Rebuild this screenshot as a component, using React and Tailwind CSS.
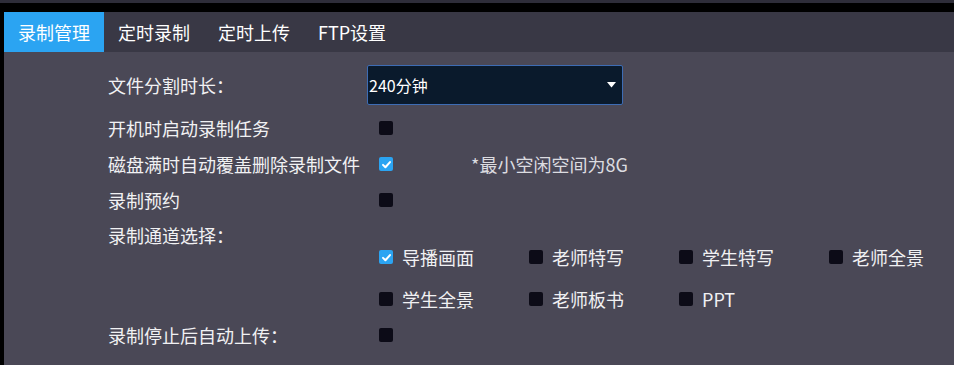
import React from 'react';

const tabs = ['录制管理', '定时录制', '定时上传', 'FTP设置'];

const channels = [
  { name: '导播画面', checked: true },
  { name: '老师特写', checked: false },
  { name: '学生特写', checked: false },
  { name: '老师全景', checked: false },
  { name: '学生全景', checked: false },
  { name: '老师板书', checked: false },
  { name: 'PPT', checked: false },
];

function Check({ checked }) {
  if (checked) {
    return (
      <span className="flex w-[14px] h-[14px] shrink-0 items-center justify-center rounded-[2px] bg-[#2ba4f2]">
        <svg width="11" height="11" viewBox="0 0 12 12">
          <path d="M2.2 6.4l2.6 2.6 5-5.6" fill="none" stroke="#ffffff" strokeWidth="2.2" strokeLinecap="round" strokeLinejoin="round" />
        </svg>
      </span>
    );
  }
  return <span className="block w-[14px] h-[14px] shrink-0 rounded-[2px] bg-[#0c0b17]" />;
}

function Row({ label, children, className = 'h-[36px]' }) {
  return (
    <div className={`flex items-center ${className}`}>
      <div className="w-[259px] shrink-0">{label}</div>
      <div className="flex items-center">{children}</div>
    </div>
  );
}

export default function App() {
  return (
    <div
      className="w-[954px] h-[365px] overflow-hidden bg-black flex flex-col text-[18px] text-[#f1f1f3]"
      style={{ fontFamily: '"Microsoft YaHei", "Noto Sans CJK SC", "Noto Sans", sans-serif' }}
    >
      <div className="h-[3px] bg-[#2e2d39] shrink-0" />
      <div className="flex-1 flex flex-col pt-[9px] pl-[4px]">
        <div className="flex h-[40px] bg-[#393845] shrink-0">
          {tabs.map((t, i) => (
            <div
              key={t}
              className={`flex items-center px-[14px] text-white ${i === 0 ? 'bg-[#2ba4f2]' : ''}`}
            >
              {t}
            </div>
          ))}
        </div>

        <div className="flex-1 bg-[#4a4856] pl-[104px]">
          <Row label="文件分割时长：" className="h-[40px] mt-[13px]">
            <div className="flex items-center justify-between w-[256px] h-[40px] border border-[#3d6cb4] bg-[#0a1a2c] rounded-[2px] pl-px pr-[6px] text-[16px] text-white">
              <span>240分钟</span>
              <svg width="9" height="6" viewBox="0 0 9 6">
                <path d="M0 0h9L4.5 5.5z" fill="#ffffff" />
              </svg>
            </div>
          </Row>

          <div className="mt-[5px]">
            <Row label="开机时启动录制任务">
              <span className="ml-[12px]"><Check checked={false} /></span>
            </Row>
            <Row label="磁盘满时自动覆盖删除录制文件">
              <span className="ml-[12px]"><Check checked={true} /></span>
              <span className="ml-[78px] text-[#dcdce0]">*最小空闲空间为8G</span>
            </Row>
            <Row label="录制预约">
              <span className="ml-[12px]"><Check checked={false} /></span>
            </Row>
          </div>

          <div className="flex items-start">
            <div className="w-[259px] shrink-0 leading-[34px]">录制通道选择：</div>
            <div className="grid grid-cols-[150px_150px_150px_150px] pt-[18px] pl-[12px]">
              {channels.map((c) => (
                <div key={c.name} className="flex items-center gap-[9px] h-[42px]">
                  <Check checked={c.checked} />
                  <span>{c.name}</span>
                </div>
              ))}
            </div>
          </div>

          <Row label="录制停止后自动上传：" className="h-[30px]">
            <span className="ml-[12px]"><Check checked={false} /></span>
          </Row>
        </div>
      </div>
    </div>
  );
}
